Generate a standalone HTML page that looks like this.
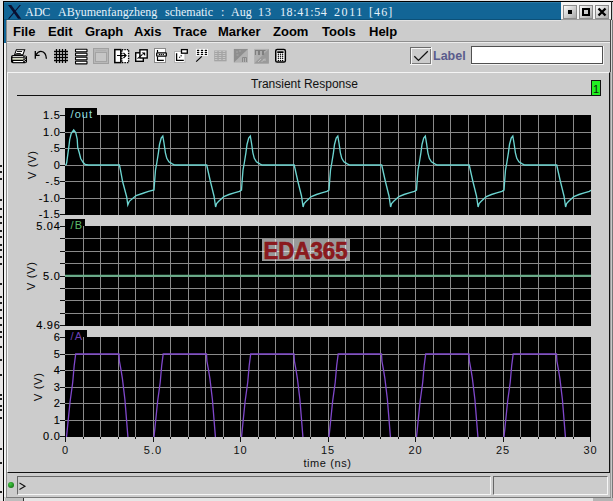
<!DOCTYPE html>
<html><head><meta charset="utf-8">
<style>
html,body{margin:0;padding:0;}
body{width:613px;height:501px;overflow:hidden;position:relative;background:#e8e6e6;font-family:"Liberation Sans",sans-serif;}
.a{position:absolute;}
.mi{position:absolute;top:24px;font-weight:bold;font-size:13px;color:#000;}
.tt{position:absolute;top:5px;font-family:"Liberation Serif",serif;font-size:12px;color:#e6f2fa;white-space:pre;}
</style></head><body>
<!-- bg marks --><div class="a" style="left:0;top:165px;width:2px;height:2px;background:#222"></div><div class="a" style="left:0;top:171px;width:2px;height:2px;background:#222"></div><div class="a" style="left:0;top:178px;width:2px;height:2px;background:#222"></div><div class="a" style="left:0;top:199px;width:2px;height:2px;background:#222"></div><div class="a" style="left:0;top:208px;width:2px;height:2px;background:#222"></div><div class="a" style="left:0;top:216px;width:2px;height:2px;background:#222"></div><div class="a" style="left:0;top:222px;width:2px;height:2px;background:#222"></div><div class="a" style="left:0;top:230px;width:2px;height:2px;background:#222"></div><div class="a" style="left:0;top:236px;width:2px;height:2px;background:#222"></div><div class="a" style="left:0;top:244px;width:2px;height:2px;background:#222"></div><div class="a" style="left:0;top:249px;width:2px;height:2px;background:#222"></div><div class="a" style="left:0;top:256px;width:2px;height:2px;background:#222"></div><div class="a" style="left:0;top:263px;width:2px;height:2px;background:#222"></div><div class="a" style="left:0;top:283px;width:2px;height:2px;background:#222"></div><div class="a" style="left:0;top:296px;width:2px;height:2px;background:#222"></div><div class="a" style="left:0;top:302px;width:2px;height:2px;background:#222"></div><div class="a" style="left:0;top:309px;width:2px;height:2px;background:#222"></div><div class="a" style="left:0;top:317px;width:2px;height:2px;background:#222"></div><div class="a" style="left:0;top:324px;width:2px;height:2px;background:#222"></div><div class="a" style="left:0;top:331px;width:2px;height:2px;background:#222"></div><div class="a" style="left:0;top:336px;width:2px;height:2px;background:#222"></div><div class="a" style="left:0;top:346px;width:2px;height:2px;background:#222"></div><div class="a" style="left:0;top:359px;width:2px;height:2px;background:#222"></div><div class="a" style="left:0;top:374px;width:2px;height:2px;background:#222"></div><div class="a" style="left:0;top:394px;width:2px;height:2px;background:#222"></div><div class="a" style="left:0;top:398px;width:2px;height:2px;background:#222"></div><div class="a" style="left:0;top:405px;width:2px;height:2px;background:#222"></div><div class="a" style="left:0;top:409px;width:2px;height:2px;background:#222"></div><div class="a" style="left:0;top:417px;width:2px;height:2px;background:#222"></div><div class="a" style="left:0;top:448px;width:2px;height:2px;background:#222"></div><div class="a" style="left:0;top:462px;width:2px;height:2px;background:#222"></div><div class="a" style="left:0;top:491px;width:2px;height:2px;background:#222"></div>
<!-- window frame -->
<div class="a" style="left:3px;top:1px;width:610px;height:500px;background:#000"></div>
<div class="a" style="left:4px;top:2px;width:609px;height:499px;background:#cccccc"></div>
<!-- title bar -->
<div class="a" style="left:4px;top:2px;width:557px;height:18px;background:#126596"></div>
<div class="a" style="left:4px;top:20px;width:2px;height:23px;background:#126596"></div>
<div class="a" style="left:561px;top:2px;width:50px;height:18px;background:#f4f4f4"></div><div class="a" style="left:561px;top:19px;width:50px;height:1px;background:#9a9a9a"></div>
<div class="a" style="left:7px;top:20px;width:554px;height:1px;background:#e2e2e2"></div>
<div class="a" style="left:4px;top:19px;width:557px;height:1px;background:#0c5078"></div>
<div class="a" style="left:4px;top:2px;width:557px;height:1px;background:#2c7aa6"></div>
<!-- X logo -->
<svg class="a" style="left:0;top:0" width="24" height="22"><path d="M8 5 L11.3 5 L21.3 18.8 L18 18.8 Z" fill="#0a1030"/><path d="M19.6 5 L21 5 L9.4 18.8 L8 18.8 Z" fill="#0a1030"/></svg>
<div class="tt" style="left:25px">ADC</div>
<div class="tt" style="left:58px">AByumenfangzheng</div>
<div class="tt" style="left:165px">schematic</div>
<div class="tt" style="left:221px">:</div>
<div class="tt" style="left:231px">Aug</div>
<div class="tt" style="left:258px;letter-spacing:1px">13</div>
<div class="tt" style="left:280px;letter-spacing:0.6px">18:41:54</div>
<div class="tt" style="left:334px;letter-spacing:1.6px">2011</div>
<div class="tt" style="left:369px;letter-spacing:1.1px">[46]</div>
<!-- title buttons -->
<div class="a" style="left:563px;top:5px;width:13px;height:13px;background:linear-gradient(135deg,#fcfcfc,#a8a8a8);border:1px solid #8c8c8c;box-sizing:border-box;width:14px;height:14px"></div>
<div class="a" style="left:568px;top:10px;width:4px;height:4px;background:#000"></div>
<div class="a" style="left:579px;top:5px;width:13px;height:13px;background:linear-gradient(135deg,#fcfcfc,#a8a8a8);border:1px solid #8c8c8c;box-sizing:border-box;width:14px;height:14px"></div>
<div class="a" style="left:582px;top:8px;width:4px;height:4px;border:2px solid #000;background:#ccc"></div>
<div class="a" style="left:595px;top:5px;width:13px;height:13px;background:linear-gradient(135deg,#fcfcfc,#a8a8a8);border:1px solid #8c8c8c;box-sizing:border-box;width:14px;height:14px"></div>
<svg class="a" style="left:597px;top:7px" width="10" height="10"><path d="M1.5 1.5L8.5 8.5M8.5 1.5L1.5 8.5" stroke="#000" stroke-width="2.4"/></svg>
<!-- left inner frame -->
<div class="a" style="left:4px;top:43px;width:2px;height:454px;background:#f2f2f2"></div>
<div class="a" style="left:6px;top:20px;width:1px;height:477px;background:#8a8a8a"></div>
<div class="a" style="left:610px;top:72px;width:1px;height:425px;background:#9a9a9a"></div><div class="a" style="left:611px;top:1px;width:1px;height:19px;background:#222"></div><div class="a" style="left:610px;top:20px;width:1px;height:52px;background:#444"></div><div class="a" style="left:611px;top:20px;width:1px;height:52px;background:#d8d8d8"></div><div class="a" style="left:611px;top:72px;width:1px;height:425px;background:#c8c8c8"></div><div class="a" style="left:612px;top:20px;width:1px;height:481px;background:#777"></div>
<!-- menu -->
<div class="mi" style="left:13px">File</div>
<div class="mi" style="left:48px">Edit</div>
<div class="mi" style="left:85px">Graph</div>
<div class="mi" style="left:134px">Axis</div>
<div class="mi" style="left:173px">Trace</div>
<div class="mi" style="left:218px">Marker</div>
<div class="mi" style="left:273px">Zoom</div>
<div class="mi" style="left:322px">Tools</div>
<div class="mi" style="left:369px">Help</div>
<div class="a" style="left:7px;top:41px;width:603px;height:1px;background:#8e8e8e"></div>
<div class="a" style="left:7px;top:42px;width:603px;height:1px;background:#ececec"></div>
<!-- toolbar -->
<svg class="a" style="left:0;top:0" width="300" height="70">
<!-- printer -->
<path d="M16.4 49.7 H24.7 L22.9 54.8 H14.6 Z" fill="#fff" stroke="#000" stroke-width="1.05"/>
<rect x="17" y="51" width="5" height="0.9" fill="#000"/>
<rect x="16.2" y="53" width="4.6" height="0.9" fill="#000"/>
<rect x="11" y="55" width="16" height="8.2" rx="2" fill="#000"/>
<rect x="12.6" y="56.2" width="10.6" height="1" fill="#fff"/>
<rect x="12.4" y="58.1" width="11" height="1.6" fill="#eef2d8"/>
<rect x="13.2" y="61" width="10" height="1.1" fill="#fff"/>
<g fill="#fff"><rect x="23.6" y="55.2" width="1" height="1"/><rect x="24.8" y="56.4" width="1" height="1"/><rect x="23.6" y="57.6" width="1" height="1"/><rect x="24.8" y="58.8" width="1" height="1"/><rect x="23.6" y="60" width="1" height="1"/><rect x="24.8" y="61.2" width="1" height="1"/><rect x="25.6" y="55" width="1" height="1"/></g>
<!-- undo -->
<path d="M35.3 51 V58.8 M35.6 55.3 H39.6" stroke="#000" stroke-width="1.3" fill="none"/>
<path d="M35.8 54.8 C37.5 52.3 39.5 51.2 41 51.3 C43.8 51.5 46.2 54 46.4 58.8" stroke="#000" stroke-width="1.3" fill="none"/>
<!-- grid -->
<rect x="55.5" y="50.5" width="11" height="11" fill="#fff"/>
<path d="M56.5 49 V63 M59.5 49 V63 M62.5 49 V63 M65.5 49 V63 M54 51.5 H68 M54 54.5 H68 M54 57.5 H68 M54 60.5 H68" stroke="#000" stroke-width="1.3" fill="none"/>
<!-- lines -->
<g fill="#fff" stroke="#000" stroke-width="1.1">
<rect x="75.5" y="49.3" width="11.5" height="2.6" rx="0.4"/>
<rect x="75.5" y="53.3" width="11.5" height="2.6" rx="0.4"/>
<rect x="75.5" y="57.3" width="11.5" height="2.6" rx="0.4"/>
<rect x="75.5" y="61.3" width="11.5" height="2.6" rx="0.4"/>
</g>
<!-- disabled window -->
<rect x="93.5" y="48.5" width="15" height="15" fill="#b8b8b8" stroke="#a0a0a0" stroke-width="1"/>
<rect x="95.5" y="52.5" width="11" height="9" fill="#c6c6c6" stroke="#a4a4a4" stroke-width="1"/>
<path d="M96 50.5 H106" stroke="#b0b0b0" stroke-width="1"/>
<!-- split -->
<rect x="114.8" y="49.6" width="6" height="13" fill="#fff" stroke="#000" stroke-width="1.5"/>
<rect x="121.8" y="49.6" width="6.8" height="13" fill="#fff" stroke="#000" stroke-width="1.4" stroke-dasharray="1.5 1"/>
<path d="M117 55.5 H126 M123.5 53 L126 55.5 L123.5 58" stroke="#000" stroke-width="1.2" fill="none"/>
<!-- zoom windows -->
<rect x="135.7" y="52.8" width="7.6" height="8.5" fill="#fff" stroke="#000" stroke-width="1.4"/>
<rect x="139.9" y="49.8" width="7.3" height="8.2" fill="#fff" stroke="#000" stroke-width="1.4"/>
<path d="M137.5 58.6 L142.5 54.4" stroke="#000" stroke-width="1.1" fill="none"/>
<path d="M145.2 52.4 L145.2 56 L141.6 52.4 Z" fill="#000"/>
<!-- icon B -->
<rect x="154.5" y="48.5" width="11" height="14" fill="#fff" stroke="#8a8a8a" stroke-width="1"/>
<path d="M157.5 50 V52.5 M157.5 56.5 V60.3 H163.8" stroke="#000" stroke-width="1.2" fill="none"/>
<rect x="156.7" y="52.9" width="9.6" height="3.3" rx="0.6" fill="#fff" stroke="#000" stroke-width="1.3"/>
<circle cx="159.4" cy="54.5" r="0.7" fill="#000"/><circle cx="161.3" cy="54.5" r="0.7" fill="#000"/><circle cx="163.3" cy="54.5" r="0.7" fill="#000"/>
<!-- icon C -->
<rect x="174.5" y="51.5" width="10.5" height="11" fill="#fff" stroke="#b4b4b4" stroke-width="1"/>
<path d="M176.6 53.2 V60.4 H183.8" stroke="#000" stroke-width="1.3" fill="none"/>
<path d="M179.2 57.6 L182 55" stroke="#000" stroke-width="1.1" stroke-dasharray="1.2 0.8"/>
<rect x="181.5" y="49.6" width="5.8" height="3.6" fill="#fff" stroke="#000" stroke-width="1.3"/>
<!-- icon D -->
<rect x="195.9" y="48.9" width="12.1" height="6.9" fill="#fff"/>
<g fill="#000"><rect x="196.9" y="49.7" width="2.4" height="1.3" rx="0.5"/><rect x="200.8" y="49.7" width="2.4" height="1.3" rx="0.5"/><rect x="204.7" y="49.7" width="2.4" height="1.3" rx="0.5"/><rect x="196.9" y="51.7" width="2.4" height="1.3" rx="0.5"/><rect x="200.8" y="51.7" width="2.4" height="1.3" rx="0.5"/><rect x="204.7" y="51.7" width="2.4" height="1.3" rx="0.5"/><rect x="196.9" y="53.7" width="2.4" height="1.3" rx="0.5"/><rect x="200.8" y="53.7" width="2.4" height="1.3" rx="0.5"/><rect x="204.7" y="53.7" width="2.4" height="1.3" rx="0.5"/></g>
<path d="M196.2 61.6 L201.8 56.4" stroke="#000" stroke-width="1.2"/>
<!-- icon E disabled -->
<rect x="214.2" y="50.5" width="12.4" height="10.8" fill="#a4a4a4"/>
<g fill="#c6c6c6"><rect x="214.8" y="51" width="2.6" height="1" /><rect x="218.7" y="51" width="2.6" height="1" /><rect x="222.7" y="51" width="2.6" height="1" /><rect x="214.8" y="53" width="2.6" height="1" /><rect x="218.7" y="53" width="2.6" height="1" /><rect x="222.7" y="53" width="2.6" height="1" /><rect x="214.8" y="55" width="2.6" height="1" /><rect x="218.7" y="55" width="2.6" height="1" /><rect x="222.7" y="55" width="2.6" height="1" /><rect x="214.8" y="57" width="2.6" height="1" /><rect x="218.7" y="57" width="2.6" height="1" /><rect x="222.7" y="57" width="2.6" height="1" /><rect x="214.8" y="59" width="2.6" height="1" /><rect x="218.7" y="59" width="2.6" height="1" /><rect x="222.7" y="59" width="2.6" height="1" /></g>
<!-- icon F disabled -->
<rect x="233.9" y="48.9" width="14.1" height="13.7" fill="#b2b2b2"/>
<path d="M233.9 48.9 H248 L233.9 62.6 Z" fill="#8e8e8e"/>
<path d="M236 52 h2 M239 51 h2 M236.5 55 h2" stroke="#a8a8a8" stroke-width="1"/>
<path d="M242.5 62 V57.5 H246.5 V62 M244.5 58 V62" stroke="#8a8a8a" stroke-width="1" fill="none"/>
<!-- icon G disabled -->
<rect x="254.2" y="48.9" width="14.6" height="14.7" fill="#b0b0b0"/>
<path d="M268.8 48.9 V63.6 H254.2 Z" fill="#9a9a9a"/>
<path d="M255.5 55 V50.5 H258.5 V55 M259.5 55 V50.5 H262.5 V55 M263.5 55 V50.5 H265.5" stroke="#7e7e7e" stroke-width="1.1" fill="none"/>
<path d="M258 62 L261 59 M261.5 62 L265 58.5 M263 60 h3" stroke="#bdbdbd" stroke-width="1" fill="none"/>
<!-- calculator -->
<rect x="275.75" y="49.55" width="9.6" height="12.5" rx="1.4" fill="#fff" stroke="#000" stroke-width="1.5"/>
<rect x="277.1" y="51.2" width="6.6" height="1.7" rx="0.6" fill="#000"/>
<g fill="#000"><circle cx="278.4" cy="54.3" r="0.75"/><circle cx="280.5" cy="54.3" r="0.75"/><circle cx="282.6" cy="54.3" r="0.75"/><circle cx="278.4" cy="56.3" r="0.75"/><circle cx="280.5" cy="56.3" r="0.75"/><circle cx="282.6" cy="56.3" r="0.75"/><circle cx="278.4" cy="58.3" r="0.75"/><circle cx="280.5" cy="58.3" r="0.75"/><circle cx="282.6" cy="58.3" r="0.75"/><circle cx="278.4" cy="60.4" r="0.75"/><circle cx="280.5" cy="60.4" r="0.75"/><circle cx="282.6" cy="60.4" r="0.75"/></g>
</svg>

<!-- label checkbox -->
<div class="a" style="left:410px;top:47px;width:22px;height:18px;background:#f4f4f4"></div>
<div class="a" style="left:410px;top:47px;width:21px;height:17px;background:#6a6a6a"></div>
<div class="a" style="left:411px;top:48px;width:20px;height:16px;background:#f4f4f4"></div>
<div class="a" style="left:412px;top:49px;width:19px;height:15px;background:#7a7a7a"></div>
<div class="a" style="left:412px;top:49px;width:18px;height:14px;background:#cccccc"></div>
<svg class="a" style="left:400px;top:40px" width="40" height="30"><path d="M14.3 16.2 L18.5 20.4 L27.8 11.3" stroke="#111" stroke-width="1.3" fill="none"/></svg>
<div class="a" style="left:433px;top:49px;font-weight:bold;font-size:12.5px;color:#5a5c8c">Label</div>
<div class="a" style="left:471px;top:46px;width:133px;height:19px;background:#f4f4f4"></div><div class="a" style="left:471px;top:46px;width:132px;height:18px;background:#505050"></div><div class="a" style="left:472px;top:47px;width:130px;height:16px;background:#fff"></div>
<!-- main panel -->
<div class="a" style="left:7px;top:72px;width:602px;height:400px;border-top:1px solid #f4f4f4;border-left:1px solid #f4f4f4;border-right:1px solid #111;border-bottom:1px solid #111;background:#cccccc;box-sizing:border-box;height:401px;width:603px"></div>
<div class="a" style="left:251px;top:77px;font-size:12px;color:#111">Transient Response</div>
<div class="a" style="left:17px;top:95px;width:575px;height:1px;background:#111"></div>
<div class="a" style="left:591px;top:80px;width:8px;height:14px;background:#22ee22;border:1px solid #111"></div>
<div class="a" style="left:593px;top:83px;font-size:11px;color:#0a200a">1</div>
<svg width="613" height="501" style="position:absolute;left:0;top:0"><rect x="65" y="115" width="526" height="100" fill="#000"/><rect x="65" y="108" width="32" height="7" fill="#000"/><rect x="65" y="226" width="526" height="100" fill="#000"/><rect x="65" y="219" width="20" height="7" fill="#000"/><rect x="65" y="337" width="526" height="100" fill="#000"/><rect x="65" y="330" width="22" height="7" fill="#000"/><defs><clipPath id="c0"><rect x="65" y="115" width="526" height="100"/></clipPath><clipPath id="c1"><rect x="65" y="226" width="526" height="100"/></clipPath><clipPath id="c2"><rect x="65" y="337" width="526" height="100"/></clipPath></defs><path d="M65 132.5H591M65 148.5H591M65 165.5H591M65 181.5H591M65 198.5H591M83.5 115V215M100.5 115V215M118.5 115V215M135.5 115V215M153.5 115V215M170.5 115V215M188.5 115V215M205.5 115V215M223.5 115V215M240.5 115V215M258.5 115V215M275.5 115V215M293.5 115V215M310.5 115V215M328.5 115V215M345.5 115V215M363.5 115V215M380.5 115V215M398.5 115V215M415.5 115V215M433.5 115V215M450.5 115V215M468.5 115V215M485.5 115V215M503.5 115V215M520.5 115V215M538.5 115V215M555.5 115V215M573.5 115V215" stroke="#8a8a8a" stroke-width="1" fill="none" shape-rendering="crispEdges"/><path d="M65 238.5H591M65 251.5H591M65 263.5H591M65 276.5H591M65 288.5H591M65 300.5H591M65 313.5H591M83.5 226V326M100.5 226V326M118.5 226V326M135.5 226V326M153.5 226V326M170.5 226V326M188.5 226V326M205.5 226V326M223.5 226V326M240.5 226V326M258.5 226V326M275.5 226V326M293.5 226V326M310.5 226V326M328.5 226V326M345.5 226V326M363.5 226V326M380.5 226V326M398.5 226V326M415.5 226V326M433.5 226V326M450.5 226V326M468.5 226V326M485.5 226V326M503.5 226V326M520.5 226V326M538.5 226V326M555.5 226V326M573.5 226V326" stroke="#8a8a8a" stroke-width="1" fill="none" shape-rendering="crispEdges"/><path d="M65 354.5H591M65 370.5H591M65 387.5H591M65 403.5H591M65 420.5H591M83.5 337V437M100.5 337V437M118.5 337V437M135.5 337V437M153.5 337V437M170.5 337V437M188.5 337V437M205.5 337V437M223.5 337V437M240.5 337V437M258.5 337V437M275.5 337V437M293.5 337V437M310.5 337V437M328.5 337V437M345.5 337V437M363.5 337V437M380.5 337V437M398.5 337V437M415.5 337V437M433.5 337V437M450.5 337V437M468.5 337V437M485.5 337V437M503.5 337V437M520.5 337V437M538.5 337V437M555.5 337V437M573.5 337V437" stroke="#8a8a8a" stroke-width="1" fill="none" shape-rendering="crispEdges"/><rect x="262" y="239" width="88" height="22" fill="#fff" fill-opacity="0.6"/><text x="263.5" y="259" font-family="Liberation Sans" font-weight="bold" font-size="23" fill="#8a1216" fill-opacity="0.95" stroke="#8a1216" stroke-opacity="0.92" stroke-width="0.7" textLength="84" lengthAdjust="spacingAndGlyphs">EDA365</text><path d="M65.20 165.00 L66.20 164.50 L66.70 162.50 L68.20 151.50 L68.70 148.00 L69.70 139.50 L71.20 133.50 L73.70 129.80 L75.70 132.50 L77.20 139.00 L77.70 147.50 L79.20 152.50 L80.70 158.50 L83.20 162.50 L85.20 164.50 L88.20 165.00 L119.40 165.00 L120.50 170.20 L122.60 181.50 L126.70 197.00 L127.80 204.90 L129.30 201.30 L136.10 195.50 L142.30 193.50 L148.50 191.30 L154.00 190.00 L154.60 181.50 L155.50 170.00 L156.70 163.50 L158.40 152.80 L159.50 144.50 L161.20 138.00 L162.80 136.00 L164.00 143.00 L165.40 152.80 L166.80 158.30 L168.90 161.80 L172.30 163.90 L174.70 165.00 L206.70 165.00 L210.40 181.50 L214.00 196.00 L215.60 207.00 L216.60 203.50 L218.70 201.30 L223.90 196.50 L229.00 194.50 L234.20 192.80 L239.40 191.40 L241.50 190.00 L242.10 181.50 L243.00 170.00 L244.20 163.50 L245.90 152.80 L247.00 144.50 L248.70 138.00 L250.30 136.00 L251.50 143.00 L252.90 152.80 L254.30 158.30 L256.40 161.80 L259.80 163.90 L262.20 165.00 L294.20 165.00 L297.90 181.50 L301.50 196.00 L303.10 207.00 L304.10 203.50 L306.20 201.30 L311.40 196.50 L316.50 194.50 L321.70 192.80 L326.90 191.40 L329.00 190.00 L329.60 181.50 L330.50 170.00 L331.70 163.50 L333.40 152.80 L334.50 144.50 L336.20 138.00 L337.80 136.00 L339.00 143.00 L340.40 152.80 L341.80 158.30 L343.90 161.80 L347.30 163.90 L349.70 165.00 L381.70 165.00 L385.40 181.50 L389.00 196.00 L390.60 207.00 L391.60 203.50 L393.70 201.30 L398.90 196.50 L404.00 194.50 L409.20 192.80 L414.40 191.40 L416.50 190.00 L417.10 181.50 L418.00 170.00 L419.20 163.50 L420.90 152.80 L422.00 144.50 L423.70 138.00 L425.30 136.00 L426.50 143.00 L427.90 152.80 L429.30 158.30 L431.40 161.80 L434.80 163.90 L437.20 165.00 L469.20 165.00 L472.90 181.50 L476.50 196.00 L478.10 207.00 L479.10 203.50 L481.20 201.30 L486.40 196.50 L491.50 194.50 L496.70 192.80 L501.90 191.40 L504.00 190.00 L504.60 181.50 L505.50 170.00 L506.70 163.50 L508.40 152.80 L509.50 144.50 L511.20 138.00 L512.80 136.00 L514.00 143.00 L515.40 152.80 L516.80 158.30 L518.90 161.80 L522.30 163.90 L524.70 165.00 L556.70 165.00 L560.40 181.50 L564.00 196.00 L565.60 207.00 L566.60 203.50 L568.70 201.30 L573.90 196.50 L579.00 194.50 L584.20 192.80 L589.40 191.40 L594.20 188.00" stroke="#6cd4d0" stroke-width="1.35" fill="none" clip-path="url(#c0)"/><path d="M65 275.80H591" stroke="#66ae88" stroke-width="1.9" fill="none"/><path d="M65.20 438.10 L66.40 438.10 L70.10 401.50 L72.70 382.50 L74.20 365.50 L75.70 354.00 L119.00 354.00 L119.40 361.00 L121.00 369.90 L122.40 378.70 L124.90 399.50 L128.00 438.10 L153.90 438.10 L157.60 401.50 L160.20 382.50 L161.70 365.50 L163.20 354.00 L206.50 354.00 L206.90 361.00 L208.50 369.90 L209.90 378.70 L212.40 399.50 L215.50 438.10 L241.40 438.10 L245.10 401.50 L247.70 382.50 L249.20 365.50 L250.70 354.00 L294.00 354.00 L294.40 361.00 L296.00 369.90 L297.40 378.70 L299.90 399.50 L303.00 438.10 L328.90 438.10 L332.60 401.50 L335.20 382.50 L336.70 365.50 L338.20 354.00 L381.50 354.00 L381.90 361.00 L383.50 369.90 L384.90 378.70 L387.40 399.50 L390.50 438.10 L416.40 438.10 L420.10 401.50 L422.70 382.50 L424.20 365.50 L425.70 354.00 L469.00 354.00 L469.40 361.00 L471.00 369.90 L472.40 378.70 L474.90 399.50 L478.00 438.10 L503.90 438.10 L507.60 401.50 L510.20 382.50 L511.70 365.50 L513.20 354.00 L556.50 354.00 L556.90 361.00 L558.50 369.90 L559.90 378.70 L562.40 399.50 L565.50 438.10 L591.20 438.10" stroke="#8048cc" stroke-width="1.3" fill="none" clip-path="url(#c2)"/><text x="70.5" y="118" font-family="Liberation Sans" font-size="11" letter-spacing="1.1" fill="#90dede">/out</text><text x="70.5" y="229" font-family="Liberation Sans" font-size="11" letter-spacing="1.1" fill="#5cbc6c">/B</text><text x="70.5" y="340" font-family="Liberation Sans" font-size="11" letter-spacing="1.1" fill="#6c40b4">/A</text><text x="60.5" y="119" text-anchor="end" font-family="Liberation Sans" font-size="11" letter-spacing="0.7" fill="#000" stroke="#000" stroke-width="0.12">1.5</text><text x="60.5" y="136" text-anchor="end" font-family="Liberation Sans" font-size="11" letter-spacing="0.7" fill="#000" stroke="#000" stroke-width="0.12">1.0</text><text x="60.5" y="152" text-anchor="end" font-family="Liberation Sans" font-size="11" letter-spacing="0.7" fill="#000" stroke="#000" stroke-width="0.12">.5</text><text x="60.5" y="169" text-anchor="end" font-family="Liberation Sans" font-size="11" letter-spacing="0.7" fill="#000" stroke="#000" stroke-width="0.12">0</text><text x="60.5" y="185" text-anchor="end" font-family="Liberation Sans" font-size="11" letter-spacing="0.7" fill="#000" stroke="#000" stroke-width="0.12">-.5</text><text x="60.5" y="202" text-anchor="end" font-family="Liberation Sans" font-size="11" letter-spacing="0.7" fill="#000" stroke="#000" stroke-width="0.12">-1.0</text><text x="60.5" y="218" text-anchor="end" font-family="Liberation Sans" font-size="11" letter-spacing="0.7" fill="#000" stroke="#000" stroke-width="0.12">-1.5</text><text transform="translate(35.8 164.8) rotate(-90)" text-anchor="middle" font-family="Liberation Sans" font-size="11.5" letter-spacing="0.5" fill="#111">V (V)</text><text x="60.5" y="230" text-anchor="end" font-family="Liberation Sans" font-size="11" letter-spacing="0.7" fill="#000" stroke="#000" stroke-width="0.12">5.04</text><text x="60.5" y="280" text-anchor="end" font-family="Liberation Sans" font-size="11" letter-spacing="0.7" fill="#000" stroke="#000" stroke-width="0.12">5.0</text><text x="60.5" y="329" text-anchor="end" font-family="Liberation Sans" font-size="11" letter-spacing="0.7" fill="#000" stroke="#000" stroke-width="0.12">4.96</text><text transform="translate(34.8 275.8) rotate(-90)" text-anchor="middle" font-family="Liberation Sans" font-size="11.5" letter-spacing="0.5" fill="#111">V (V)</text><text x="60.5" y="341" text-anchor="end" font-family="Liberation Sans" font-size="11" letter-spacing="0.7" fill="#000" stroke="#000" stroke-width="0.12">6</text><text x="60.5" y="358" text-anchor="end" font-family="Liberation Sans" font-size="11" letter-spacing="0.7" fill="#000" stroke="#000" stroke-width="0.12">5</text><text x="60.5" y="374" text-anchor="end" font-family="Liberation Sans" font-size="11" letter-spacing="0.7" fill="#000" stroke="#000" stroke-width="0.12">4</text><text x="60.5" y="391" text-anchor="end" font-family="Liberation Sans" font-size="11" letter-spacing="0.7" fill="#000" stroke="#000" stroke-width="0.12">3</text><text x="60.5" y="407" text-anchor="end" font-family="Liberation Sans" font-size="11" letter-spacing="0.7" fill="#000" stroke="#000" stroke-width="0.12">2</text><text x="60.5" y="424" text-anchor="end" font-family="Liberation Sans" font-size="11" letter-spacing="0.7" fill="#000" stroke="#000" stroke-width="0.12">1</text><text x="60.5" y="440" text-anchor="end" font-family="Liberation Sans" font-size="11" letter-spacing="0.7" fill="#000" stroke="#000" stroke-width="0.12">0.0</text><text transform="translate(42.0 386.8) rotate(-90)" text-anchor="middle" font-family="Liberation Sans" font-size="11.5" letter-spacing="0.5" fill="#111">V (V)</text><path d="M60 115.5H65M60 132.5H65M60 148.5H65M60 165.5H65M60 181.5H65M60 198.5H65M60 214.5H65M60 226.5H65M60 238.5H65M60 251.5H65M60 263.5H65M60 276.5H65M60 288.5H65M60 300.5H65M60 313.5H65M60 325.5H65M60 337.5H65M60 354.5H65M60 370.5H65M60 387.5H65M60 403.5H65M60 420.5H65M60 436.5H65M65.5 437V442M83.5 437V439M100.5 437V439M118.5 437V439M135.5 437V439M153.5 437V442M170.5 437V439M188.5 437V439M205.5 437V439M223.5 437V439M240.5 437V442M258.5 437V439M275.5 437V439M293.5 437V439M310.5 437V439M328.5 437V442M345.5 437V439M363.5 437V439M380.5 437V439M398.5 437V439M415.5 437V442M433.5 437V439M450.5 437V439M468.5 437V439M485.5 437V439M503.5 437V442M520.5 437V439M538.5 437V439M555.5 437V439M573.5 437V439M590.5 437V442" stroke="#111" stroke-width="1" fill="none" shape-rendering="crispEdges"/><text x="65.5" y="454" text-anchor="middle" font-family="Liberation Sans" font-size="11" letter-spacing="1" fill="#111">0</text><text x="153.0" y="454" text-anchor="middle" font-family="Liberation Sans" font-size="11" letter-spacing="1" fill="#111">5.0</text><text x="240.5" y="454" text-anchor="middle" font-family="Liberation Sans" font-size="11" letter-spacing="1" fill="#111">10</text><text x="328.0" y="454" text-anchor="middle" font-family="Liberation Sans" font-size="11" letter-spacing="1" fill="#111">15</text><text x="415.5" y="454" text-anchor="middle" font-family="Liberation Sans" font-size="11" letter-spacing="1" fill="#111">20</text><text x="503.0" y="454" text-anchor="middle" font-family="Liberation Sans" font-size="11" letter-spacing="1" fill="#111">25</text><text x="590.5" y="454" text-anchor="middle" font-family="Liberation Sans" font-size="11" letter-spacing="1" fill="#111">30</text><text x="327.5" y="467" text-anchor="middle" font-family="Liberation Sans" font-size="11" letter-spacing="0.6" fill="#111">time (ns)</text></svg>
<!-- command line -->
<div class="a" style="left:8px;top:482px;width:6px;height:6px;border-radius:50%;background:radial-gradient(circle at 40% 35%,#4c4,#0a5a0a)"></div>
<div class="a" style="left:17px;top:476px;width:472px;height:17px;border-top:1px solid #666;border-left:1px solid #666;border-right:1px solid #f6f6f6;border-bottom:1px solid #f6f6f6;background:#cccccc"></div>
<svg class="a" style="left:18px;top:482px" width="9" height="9"><path d="M1.5 1 L7 4.2 L1.5 7.5" stroke="#111" stroke-width="1.1" fill="none"/></svg>
<div class="a" style="left:493px;top:476px;width:113px;height:17px;border-top:1px solid #666;border-left:1px solid #666;border-right:1px solid #f6f6f6;border-bottom:1px solid #f6f6f6;background:#cccccc"></div>
<div class="a" style="left:6px;top:497px;width:605px;height:1px;background:#7a7a7a"></div>
<div class="a" style="left:4px;top:498px;width:609px;height:3px;background:#e6e6e6"></div>
<div class="a" style="left:5px;top:498px;width:18px;height:3px;background:#bdbdbd"></div>
<div class="a" style="left:23px;top:498px;width:1px;height:3px;background:#333"></div>
<div class="a" style="left:593px;top:498px;width:20px;height:3px;background:#b4b4b4"></div>
</body></html>
